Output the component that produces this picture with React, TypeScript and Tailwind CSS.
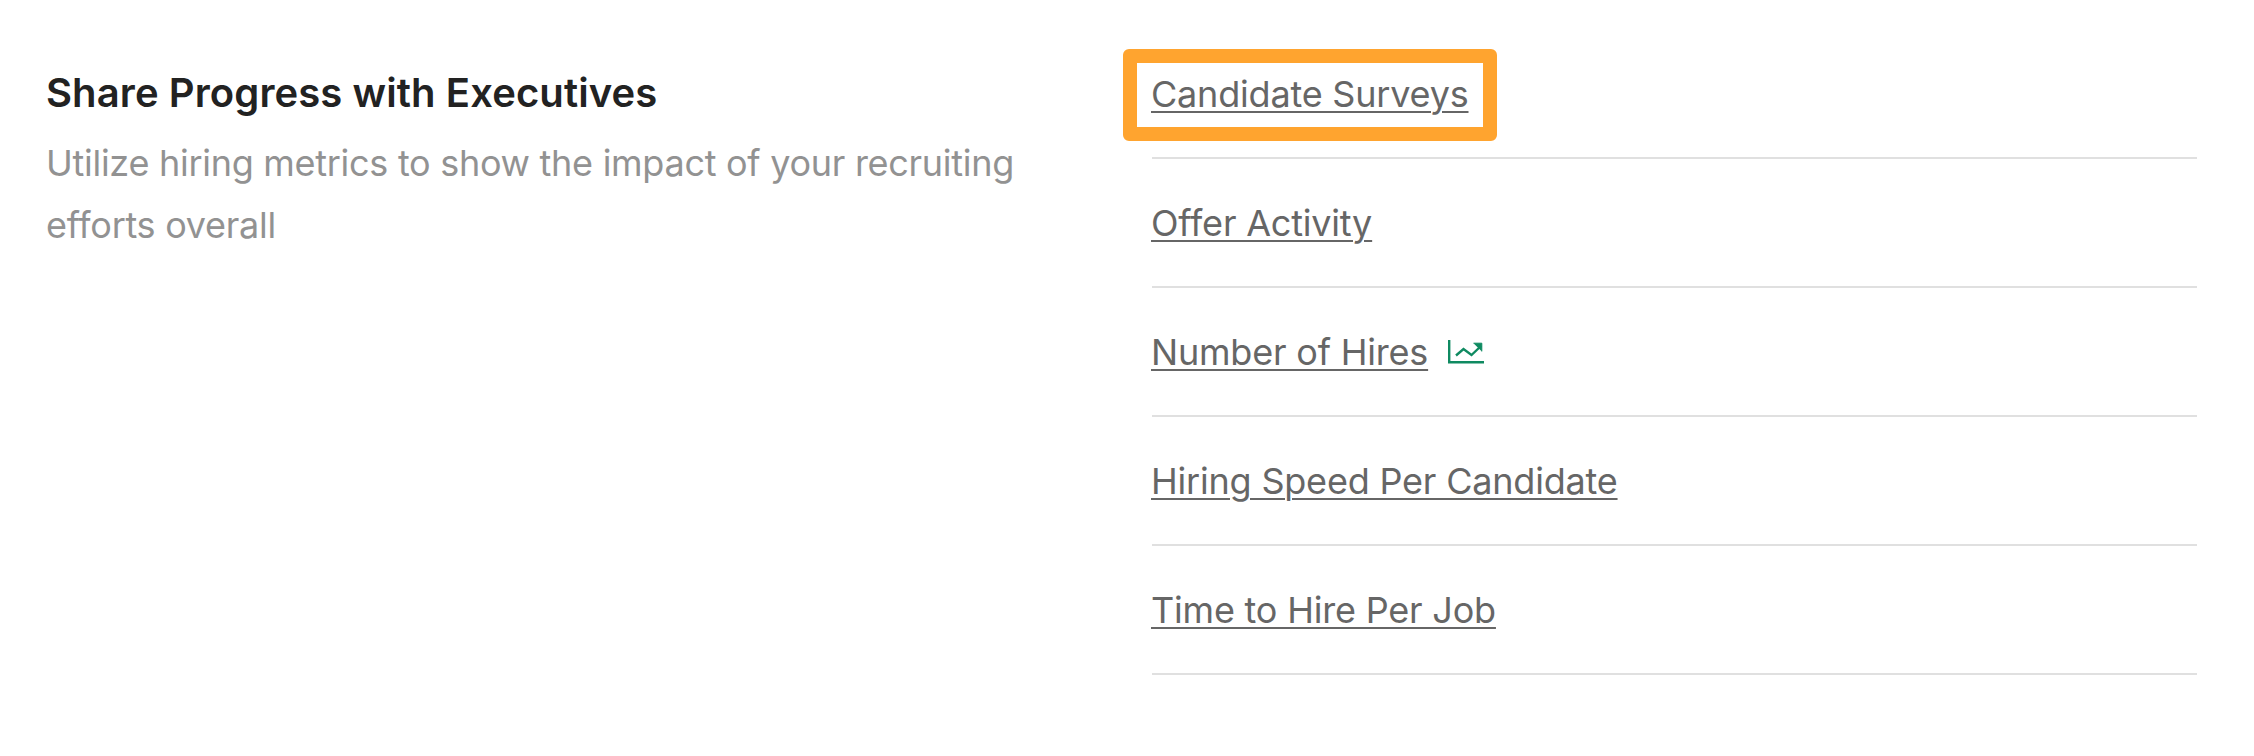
const metrics = ['Candidate Surveys', 'Offer Activity', 'Number of Hires', 'Hiring Speed Per Candidate', 'Time to Hire Per Job'];

function TrendIcon() {
  return (
    <svg width="36" height="24" viewBox="0 0 36 24" fill="none" stroke="#0f8a61" strokeWidth="2.4" className="ml-[20px]">
      <path d="M1.2 0v22.3H36" />
      <path d="M8 15.5l7.5-6.5 8 6 9.5-9" />
      <path d="M25.5 3.2h8.3v8.2" fill="#0f8a61" strokeWidth="1" />
    </svg>
  );
}

export default function App() {
  return (
    <div className="flex h-[756px] w-[2254px] bg-white pl-[46px] pr-[57px] text-[36px] font-['Inter',sans-serif]">
      <div className="w-[1106px] shrink-0 pt-[66px]">
        <h3 className="text-[40px] font-semibold leading-[54px] tracking-[0.1px] text-[#222222]">Share Progress with Executives</h3>
        <p className="mt-[12px] w-[1000px] leading-[62px] tracking-[-0.28px] text-[#929292]">
          Utilize hiring metrics to show the impact of your recruiting efforts overall
        </p>
      </div>
      <ul className="flex-1 pt-[30px]">
        {metrics.map((name, i) => (
          <li key={name} className="flex h-[129px] items-center border-b-2 border-[#e0e0e0] tracking-[-0.2px] text-[#666666]">
            <span className="relative -ml-px">
              <a href="#" className="underline decoration-2 underline-offset-[4px]">{name}</a>
              {i === 0 && (
                <span className="absolute -left-[28px] -right-[28px] -top-[18px] -bottom-[20px] rounded-[6px] border-[14px] border-[#ffa42f]" />
              )}
            </span>
            {i === 2 && <TrendIcon />}
          </li>
        ))}
      </ul>
    </div>
  );
}
